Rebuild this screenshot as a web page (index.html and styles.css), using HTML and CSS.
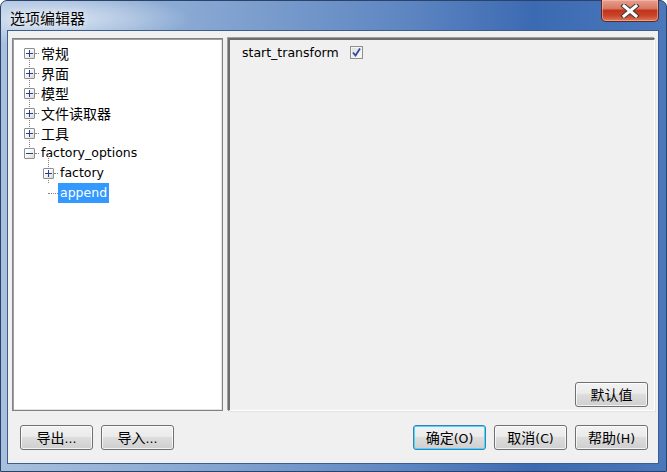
FILE: index.html
```html
<!DOCTYPE html>
<html>
<head>
<meta charset="utf-8">
<link rel="stylesheet" href="styles.css">
</head>
<body>
<div class="window">
  <div class="titlebar">
    <span class="title">选项编辑器</span>
    <button class="close" aria-label="close">
      <svg width="20" height="14" viewBox="0 0 20 14">
        <path d="M4 2 L16 12 M16 2 L4 12" stroke="#3a3a3a" stroke-width="5" stroke-linecap="square"/>
        <path d="M4 2 L16 12 M16 2 L4 12" stroke="#ffffff" stroke-width="3" stroke-linecap="square"/>
      </svg>
    </button>
  </div>
  <div class="client">
    <div class="main">
      <div class="tree">
        <ul class="level1">
          <li class="row"><span class="exp"><span class="h"></span><span class="v"></span></span><span class="dash"></span><span class="label cjk">常规</span></li>
          <li class="row"><span class="exp"><span class="h"></span><span class="v"></span></span><span class="dash"></span><span class="label cjk">界面</span></li>
          <li class="row"><span class="exp"><span class="h"></span><span class="v"></span></span><span class="dash"></span><span class="label cjk">模型</span></li>
          <li class="row"><span class="exp"><span class="h"></span><span class="v"></span></span><span class="dash"></span><span class="label cjk">文件读取器</span></li>
          <li class="row"><span class="exp"><span class="h"></span><span class="v"></span></span><span class="dash"></span><span class="label cjk">工具</span></li>
          <li class="row"><span class="exp"><span class="h"></span></span><span class="dash"></span><span class="label">factory_options</span></li>
          <li class="sub">
            <ul class="level2">
              <li class="row"><span class="exp"><span class="h"></span><span class="v"></span></span><span class="dash"></span><span class="label">factory</span></li>
              <li class="row leaf"><span class="corner"></span><span class="label sel">append</span></li>
            </ul>
          </li>
        </ul>
      </div>
      <div class="panel">
        <div class="option">
          <span class="optname">start_transform</span>
          <span class="checkbox">
            <svg width="11" height="11" viewBox="0 0 11 11"><path d="M2 5.5 L4.5 8.5 L9 1.5" fill="none" stroke="#2c4a96" stroke-width="1.8"/></svg>
          </span>
        </div>
        <div class="panel-actions">
          <button class="btn"><span class="cjk">默认值</span></button>
        </div>
      </div>
    </div>
    <div class="footer">
      <div class="group">
        <button class="btn"><span class="cjk">导出</span>...</button>
        <button class="btn"><span class="cjk">导入</span>...</button>
      </div>
      <div class="group">
        <button class="btn default"><span class="cjk">确定</span>(O)</button>
        <button class="btn"><span class="cjk">取消</span>(C)</button>
        <button class="btn"><span class="cjk">帮助</span>(H)</button>
      </div>
    </div>
  </div>
</div>
</body>
</html>
```

FILE: styles.css
```css
* { box-sizing: border-box; }
html, body { margin: 0; padding: 0; }
body {
  width: 667px;
  height: 472px;
  overflow: hidden;
  background: #ffffff;
  font-family: "DejaVu Sans", "Noto Sans CJK SC", sans-serif;
  font-size: 12.5px;
  color: #000;
}
.cjk { font-family: "Noto Sans CJK SC", "DejaVu Sans", sans-serif; font-size: 14px; }

.window {
  width: 667px;
  height: 472px;
  display: flex;
  flex-direction: column;
  border-radius: 7px 7px 0 0;
  border: 1px solid #29436a;
  background:
    radial-gradient(ellipse 140px 26px at 50px 18px, rgba(230,238,248,0.85), rgba(230,238,248,0) 100%),
    linear-gradient(to right, #a9c0dd 0%, #87a7d2 30%, #5f87c2 60%, #3c6ab2 80%, #4b78bb 100%);
}
.titlebar {
  height: 29px;
  flex: none;
  display: flex;
  justify-content: space-between;
  align-items: flex-start;
  padding-left: 9px;
  padding-right: 7px;
}
.title {
  font-family: "Noto Sans CJK SC", sans-serif;
  font-size: 15px;
  line-height: 18px;
  margin-top: 8px;
  color: #000;
  text-shadow: 0 0 6px rgba(255,255,255,0.9);
}
.close {
  width: 58px;
  height: 22px;
  margin-top: -1px;
  padding: 0;
  border: 1px solid #5a2a24;
  border-top: none;
  border-radius: 0 0 5px 5px;
  background: linear-gradient(to bottom, #e5a08e 0%, #d87a63 40%, #c2341c 50%, #c8452c 75%, #e07a55 100%);
  box-shadow: inset 0 0 0 1px rgba(255,200,190,0.5);
  display: flex;
  align-items: center;
  justify-content: center;
}
.close svg { display: block; }

.client {
  flex: 1;
  margin: 0 7px 8px 6px;
  border: 1px solid #3c5e8e;
  background: #f0f0f0;
  display: flex;
  flex-direction: column;
  padding: 7px 3px 13px 4px;
}
.main {
  height: 373px;
  display: flex;
  gap: 5px;
}
.tree {
  width: 211px;
  flex: none;
  background: #fff;
  border: 1px solid #828282;
  box-shadow: inset 1px 1px 0 #a0a0a0, inset -1px -1px 0 #e3e3e3;
  padding: 4px 1px 1px 1px;
}
.tree ul { list-style: none; margin: 0; padding: 0; }
.tree .level1 { position: relative; }
.tree .level1::before {
  content: "";
  position: absolute;
  left: 15px;
  top: 10px;
  height: 100px;
  border-left: 1px dotted #808080;
}
.tree .level2 { position: relative; padding-left: 19px; }
.tree .level2::before {
  content: "";
  position: absolute;
  left: 34px;
  top: -10px;
  height: 30px;
  border-left: 1px dotted #808080;
}
.row {
  height: 20px;
  display: flex;
  align-items: center;
  padding-left: 10px;
  white-space: nowrap;
}
.exp {
  width: 11px;
  height: 11px;
  flex: none;
  position: relative;
  z-index: 1;
  border: 1px solid #8f8f8f;
  border-radius: 1px;
  background: linear-gradient(to bottom right, #ffffff 30%, #d7d7d7);
}
.exp .h {
  position: absolute;
  left: 1px; top: 4px;
  width: 7px; height: 1px;
  background: #24418a;
}
.exp .v {
  position: absolute;
  left: 4px; top: 1px;
  width: 1px; height: 7px;
  background: #24418a;
}
.dash {
  width: 4px;
  flex: none;
  border-top: 1px dotted #808080;
}
.corner {
  width: 10px;
  margin-left: 5px;
  flex: none;
  border-top: 1px dotted #808080;
}
.label {
  height: 20px;
  line-height: 20px;
  padding: 0 2px;
}
.label.sel {
  background: #3399ff;
  color: #fff;
}

.panel {
  flex: 1;
  display: flex;
  flex-direction: column;
  justify-content: space-between;
  border-style: solid;
  border-width: 2px 1px 1px 2px;
  border-color: #6d6d6d #ffffff #ffffff #6d6d6d;
  box-shadow: -1px -1px 0 #a0a0a0, 1px 1px 0 #e3e3e3;
  background: #f0f0f0;
  padding: 4px 6px 3px 12px;
}
.option {
  display: flex;
  align-items: center;
  height: 16px;
  gap: 11px;
}
.checkbox {
  width: 13px;
  height: 13px;
  border: 1px solid #8e8f8f;
  background: linear-gradient(to bottom right, #dcdcdc, #fbfbfb);
  box-shadow: inset 0 0 0 1px #f4f4f4;
  display: flex;
  align-items: center;
  justify-content: center;
}
.checkbox svg { display: block; }
.panel-actions {
  display: flex;
  justify-content: flex-end;
}

.btn {
  width: 73px;
  height: 25px;
  padding: 0;
  border: 1px solid #707070;
  border-radius: 3px;
  background: linear-gradient(to bottom, #f2f2f2 0%, #ebebeb 45%, #dddddd 50%, #cfcfcf 100%);
  box-shadow: inset 0 0 0 1px rgba(255,255,255,0.75);
  font-family: "DejaVu Sans", "Noto Sans CJK SC", sans-serif;
  font-size: 12.5px;
  color: #000;
  display: block;
  text-align: center;
  line-height: 21px;
  white-space: nowrap;
}
.btn .cjk { vertical-align: baseline; line-height: 21px; }
.btn.default {
  border-color: #3c7fb1;
  box-shadow: inset 0 0 0 1px #48d8fb;
}

.footer {
  margin-top: 14px;
  display: flex;
  justify-content: space-between;
  padding: 0 7px 0 8px;
}
.group {
  display: flex;
  gap: 8px;
}
```
